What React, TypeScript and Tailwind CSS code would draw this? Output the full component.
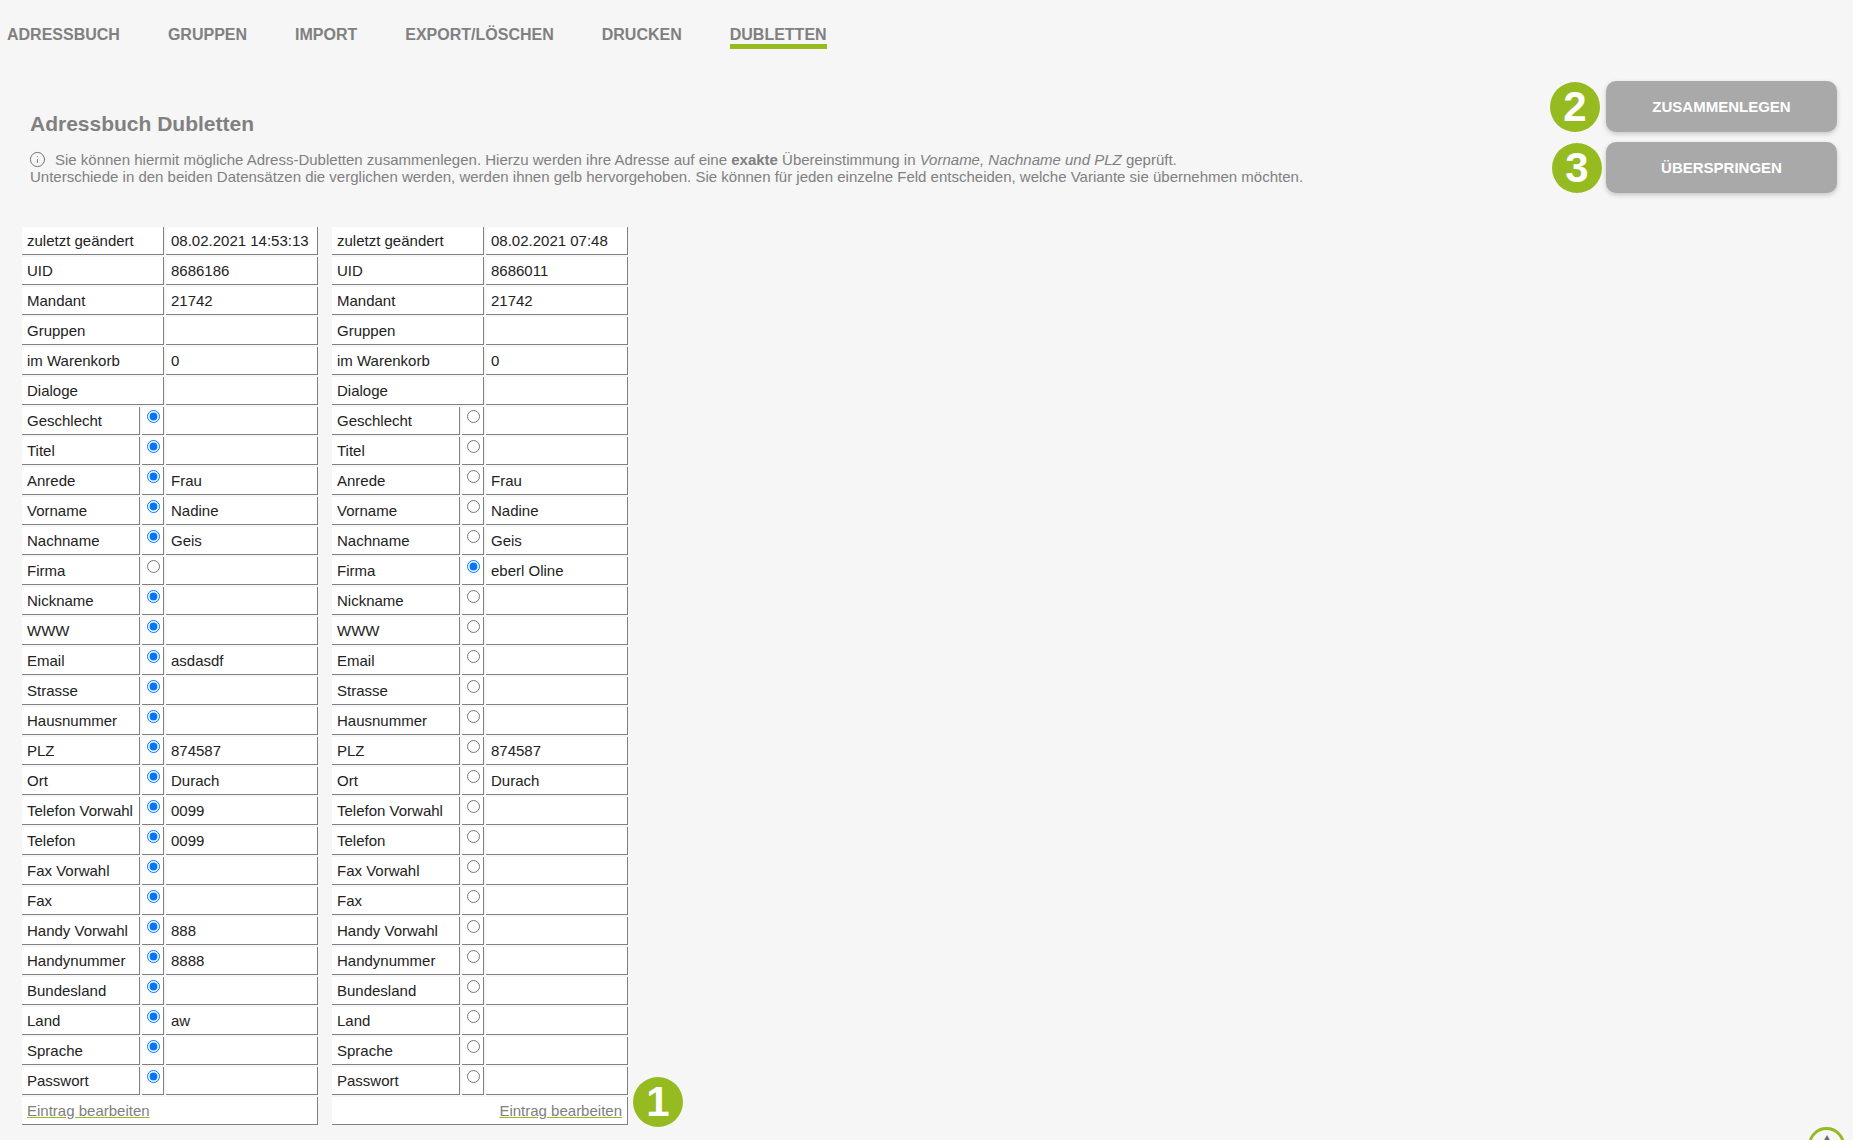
import { Info } from "lucide-react";

interface Row {
  label: string;
  left?: string;
  right?: string;
  pickRight?: boolean;
}

const META_ROWS: Row[] = [
  { label: "zuletzt geändert", left: "08.02.2021 14:53:13", right: "08.02.2021 07:48" },
  { label: "UID", left: "8686186", right: "8686011" },
  { label: "Mandant", left: "21742", right: "21742" },
  { label: "Gruppen" },
  { label: "im Warenkorb", left: "0", right: "0" },
  { label: "Dialoge" },
];

const FIELD_ROWS: Row[] = [
  { label: "Geschlecht" },
  { label: "Titel" },
  { label: "Anrede", left: "Frau", right: "Frau" },
  { label: "Vorname", left: "Nadine", right: "Nadine" },
  { label: "Nachname", left: "Geis", right: "Geis" },
  { label: "Firma", right: "eberl Oline", pickRight: true },
  { label: "Nickname" },
  { label: "WWW" },
  { label: "Email", left: "asdasdf" },
  { label: "Strasse" },
  { label: "Hausnummer" },
  { label: "PLZ", left: "874587", right: "874587" },
  { label: "Ort", left: "Durach", right: "Durach" },
  { label: "Telefon Vorwahl", left: "0099" },
  { label: "Telefon", left: "0099" },
  { label: "Fax Vorwahl" },
  { label: "Fax" },
  { label: "Handy Vorwahl", left: "888" },
  { label: "Handynummer", left: "8888" },
  { label: "Bundesland" },
  { label: "Land", left: "aw" },
  { label: "Sprache" },
  { label: "Passwort" },
];

const NAV = ["ADRESSBUCH", "GRUPPEN", "IMPORT", "EXPORT/LÖSCHEN", "DRUCKEN", "DUBLETTEN"];

function Cell({ className, children }: { className: string; children?: React.ReactNode }) {
  return (
    <div className={`h-[28px] shrink-0 bg-white border-r border-b border-[#808080] pl-[5px] leading-[28px] whitespace-nowrap ${className}`}>
      {children}
    </div>
  );
}

function Badge({ n, className }: { n: number; className: string }) {
  return (
    <div className={`w-[50px] h-[50px] rounded-full bg-[#95bb20] text-white font-bold text-[42px] leading-[50px] text-center ${className}`}>
      {n}
    </div>
  );
}

function RecordTable({ side }: { side: "left" | "right" }) {
  const isLeft = side === "left";
  const valueW = isLeft ? "w-[152px]" : "w-[142px]";
  const labelW = isLeft ? "w-[142px]" : "w-[152px]";
  const shortW = isLeft ? "w-[118px]" : "w-[128px]";

  return (
    <div className="w-[296px] flex flex-col gap-[2px] text-[15px] text-[#222]">
      {META_ROWS.map((r) => (
        <div key={r.label} className="flex gap-[2px]">
          <Cell className={labelW}>{r.label}</Cell>
          <Cell className={valueW}>{isLeft ? r.left : r.right}</Cell>
        </div>
      ))}
      {FIELD_ROWS.map((r) => (
        <div key={r.label} className="flex gap-[2px]">
          <Cell className={shortW}>{r.label}</Cell>
          <Cell className="w-[22px]">
            <input
              type="radio"
              name={r.label}
              defaultChecked={isLeft ? !r.pickRight : !!r.pickRight}
              className="block mt-[3px]"
            />
          </Cell>
          <Cell className={valueW}>{isLeft ? r.left : r.right}</Cell>
        </div>
      ))}
      <Cell className={`w-[296px] pr-[5px] ${isLeft ? "text-left" : "text-right"}`}>
        <a className="text-[#808080] underline decoration-[#95bb20]">Eintrag bearbeiten</a>
      </Cell>
    </div>
  );
}

export default function App() {
  return (
    <div className="relative h-screen overflow-hidden bg-[#f6f6f6] font-['Liberation_Sans',Arial,sans-serif]">
      <nav className="flex gap-[48px] pl-[7px] pt-[24px] h-[81px] text-[16px] font-bold text-[#808080]">
        {NAV.map((item) => (
          <a
            key={item}
            className={`h-[25px] leading-[22px] ${item === "DUBLETTEN" ? "border-b-[5px] border-[#95bb20]" : ""}`}
          >
            {item}
          </a>
        ))}
      </nav>

      <header className="flex justify-between h-[146px] pr-[16px]">
        <div className="pl-[30px] pt-[31px] text-[15px] leading-[17px] text-[#808080]">
          <h1 className="text-[21px] leading-[24px] font-bold mb-[15px]">Adressbuch Dubletten</h1>
          <p>
            <Info size={17} strokeWidth={1.4} className="inline-block -ml-[1px] mr-[9px] align-[-3px] text-[#707070]" />
            Sie können hiermit mögliche Adress-Dubletten zusammenlegen. Hierzu werden ihre Adresse auf eine{" "}
            <b>exakte</b> Übereinstimmung in <i>Vorname, Nachname und PLZ</i> geprüft.
            <br />
            Unterschiede in den beiden Datensätzen die verglichen werden, werden ihnen gelb hervorgehoben. Sie
            können für jeden einzelne Feld entscheiden, welche Variante sie übernehmen möchten.
          </p>
        </div>
        <div className="flex flex-col gap-[10px]">
          <div className="flex items-center gap-[6px]">
            <Badge n={2} className="" />
            <button className="w-[231px] h-[51px] pt-[1px] rounded-[10px] bg-[#a9a9a9] text-white font-bold text-[15px] shadow-[0_2px_5px_rgba(0,0,0,0.2)]">
              ZUSAMMENLEGEN
            </button>
          </div>
          <div className="flex items-center gap-[4px]">
            <Badge n={3} className="ml-[2px]" />
            <button className="w-[231px] h-[51px] pt-[1px] rounded-[10px] bg-[#a9a9a9] text-white font-bold text-[15px] shadow-[0_2px_5px_rgba(0,0,0,0.2)]">
              ÜBERSPRINGEN
            </button>
          </div>
        </div>
      </header>

      <main className="relative flex gap-[14px] pl-[22px] w-max">
        <RecordTable side="left" />
        <RecordTable side="right" />
        <Badge n={1} className="absolute left-[633px] top-[850px]" />
      </main>

      <button className="fixed left-[1808px] top-[1127px] w-[37px] h-[37px] rounded-full border-[3px] border-[#95bb20] bg-[#f6f6f6] flex items-start justify-center pt-[5px]">
        <svg width="14" height="12" viewBox="0 0 14 12" className="text-[#707070]">
          <polygon points="7,0 14,12 0,12" fill="currentColor" />
        </svg>
      </button>
    </div>
  );
}
